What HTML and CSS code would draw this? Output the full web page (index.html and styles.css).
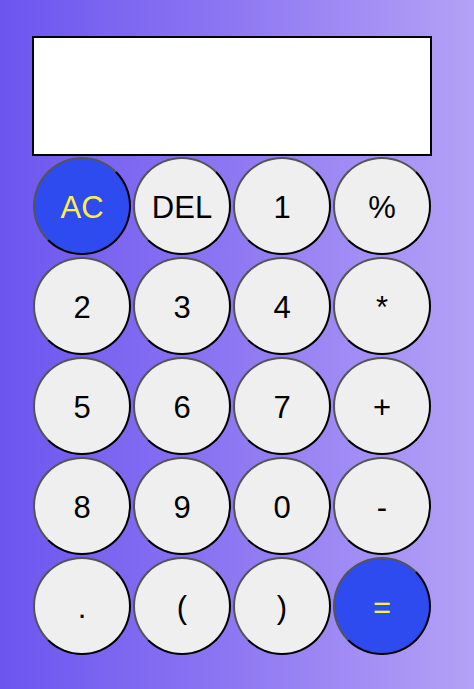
FILE: index.html
```html
<!DOCTYPE html>
<html>
<head>
<meta charset="utf-8">
<link rel="stylesheet" href="styles.css">
</head>
<body>
<div class="calc">
  <div class="display"></div>
  <div class="keys">
    <button class="key accent">AC</button>
    <button class="key">DEL</button>
    <button class="key">1</button>
    <button class="key">%</button>
    <button class="key">2</button>
    <button class="key">3</button>
    <button class="key">4</button>
    <button class="key">*</button>
    <button class="key">5</button>
    <button class="key">6</button>
    <button class="key">7</button>
    <button class="key">+</button>
    <button class="key">8</button>
    <button class="key">9</button>
    <button class="key">0</button>
    <button class="key">-</button>
    <button class="key">.</button>
    <button class="key">(</button>
    <button class="key">)</button>
    <button class="key accent">=</button>
  </div>
</div>
</body>
</html>
```

FILE: styles.css
```css
html, body {
  margin: 0;
  height: 100%;
}
body {
  background: linear-gradient(to right, #6b55ef 0%, #8b74f2 45%, #b3a2f6 100%);
  font-family: "Liberation Sans", Arial, sans-serif;
}
.calc {
  width: 400px;
  padding: 36px 0 0 32px;
}
.display {
  box-sizing: border-box;
  height: 120px;
  background: #fff;
  border: 2px solid #000;
}
.keys {
  display: grid;
  grid-template-columns: repeat(4, 100px);
  grid-auto-rows: 100px;
}
.key {
  width: 98px;
  height: 98px;
  margin: 1px;
  border-radius: 50%;
  background: #efefef;
  color: #000;
  font-family: "Liberation Sans", Arial, sans-serif;
  font-size: 31px;
  padding: 3px 0 0;
}
.key.accent {
  background: #2d4bee;
  color: #fcef45;
}
```
